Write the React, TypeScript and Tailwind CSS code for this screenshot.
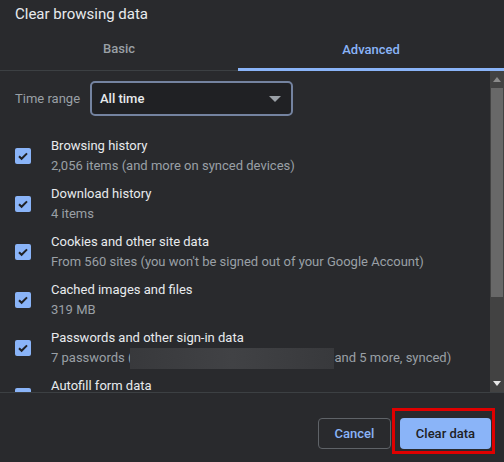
import React from "react";

const ITEMS = [
  { title: "Browsing history", sub: "2,056 items (and more on synced devices)" },
  { title: "Download history", sub: "4 items" },
  { title: "Cookies and other site data", sub: "From 560 sites (you won't be signed out of your Google Account)" },
  { title: "Cached images and files", sub: "319 MB" },
  { title: "Passwords and other sign-in data", sub: "blur" },
  { title: "Autofill form data", sub: "\u00a0" },
];

function Check() {
  return (
    <div className="w-[16px] h-[16px] rounded-[2px] bg-[#8ab4f8] flex items-center justify-center shrink-0">
      <svg width="12" height="12" viewBox="0 0 12 12">
        <path d="M2 6.2l2.6 2.6L10 3.4" fill="none" stroke="#202124" strokeWidth="2" />
      </svg>
    </div>
  );
}

export default function App() {
  return (
    <div
      className="w-[504px] h-[462px] bg-[#292a2d] text-[#e8eaed] flex flex-col overflow-hidden"
      style={{ fontFamily: "Roboto, 'Liberation Sans', sans-serif" }}
    >
      {/* header */}
      <div className="h-[30px] pl-[15px] pt-[3px] text-[15px] leading-[22px]">Clear browsing data</div>

      {/* tabs */}
      <div className="h-[41px] flex border-b border-[#3c4043]">
        <div className="w-[238px] flex items-center justify-center text-[13px] font-medium text-[#9aa0a6] pb-[2px]">
          Basic
        </div>
        <div className="flex-1 flex items-center justify-center text-[13px] font-medium text-[#8ab4f8] border-b-[3px] border-[#8ab4f8] mb-[-1px] pt-[1px]">
          Advanced
        </div>
      </div>

      {/* scroll body */}
      <div className="h-[322px] flex border-b border-[#3c4043]">
        <div className="flex-1 overflow-hidden pl-[15px] pt-[10px]">
          <div className="flex items-center h-[35px]">
            <span className="text-[13px] text-[#9aa0a6] w-[75px]">Time range</span>
            <div className="w-[203px] h-[35px] rounded-[5px] border-2 border-[#7483a0] bg-[#202124] flex items-center justify-between pl-[8px] pr-[10px]">
              <span className="text-[13px] font-medium text-[#e8eaed]">All time</span>
              <svg width="12" height="6" viewBox="0 0 12 6">
                <path d="M0 0h12L6 6z" fill="#9aa0a6" />
              </svg>
            </div>
          </div>
          <div className="mt-[16px] flex flex-col">
            {ITEMS.map((it) => (
              <div key={it.title} className="flex items-center gap-[20px] h-[48px] shrink-0">
                <Check />
                <div className="flex flex-col text-[13px] leading-[20px]">
                  <span className="text-[#e8eaed]">{it.title}</span>
                  {it.sub === "blur" ? (
                    <span className="text-[#9aa0a6] flex items-center whitespace-nowrap">
                      7 passwords (
                      <span className="inline-block w-[204px] h-[21px] ml-[-3px] mr-[1px] bg-gradient-to-r from-[#38393c] via-[#414245] to-[#38393c]" />
                      and 5 more, synced)
                    </span>
                  ) : (
                    <span className="text-[#9aa0a6] whitespace-nowrap">{it.sub}</span>
                  )}
                </div>
              </div>
            ))}
          </div>
        </div>
        {/* scrollbar */}
        <div className="w-[14px] bg-[#424242] flex flex-col">
          <div className="h-[17px] flex items-center justify-center">
            <svg width="8" height="5" viewBox="0 0 8 5">
              <path d="M4 0L8 5H0z" fill="#8a8a8a" />
            </svg>
          </div>
          <div className="h-[209px] bg-[#686868] mx-[1px]" />
          <div className="flex-1" />
          <div className="h-[17px] flex items-center justify-center">
            <svg width="8" height="5" viewBox="0 0 8 5">
              <path d="M0 0h8L4 5z" fill="#e8e8e8" />
            </svg>
          </div>
        </div>
      </div>

      {/* footer */}
      <div className="flex-1 flex items-start justify-end pr-[13px] pt-[25px] gap-[9px]">
        <button className="h-[31px] w-[73px] rounded-[4px] border border-[#5f6368] text-[13px] font-medium text-[#8ab4f8]">
          Cancel
        </button>
        <div className="relative">
          <button className="h-[31px] w-[91px] rounded-[4px] bg-[#8ab4f8] text-[13px] font-medium text-[#202124]">
            Clear data
          </button>
          <div className="absolute left-[-8px] right-[-4px] top-[-10px] bottom-[-5px] border-[3px] border-[#e00000] pointer-events-none" />
        </div>
      </div>
    </div>
  );
}
